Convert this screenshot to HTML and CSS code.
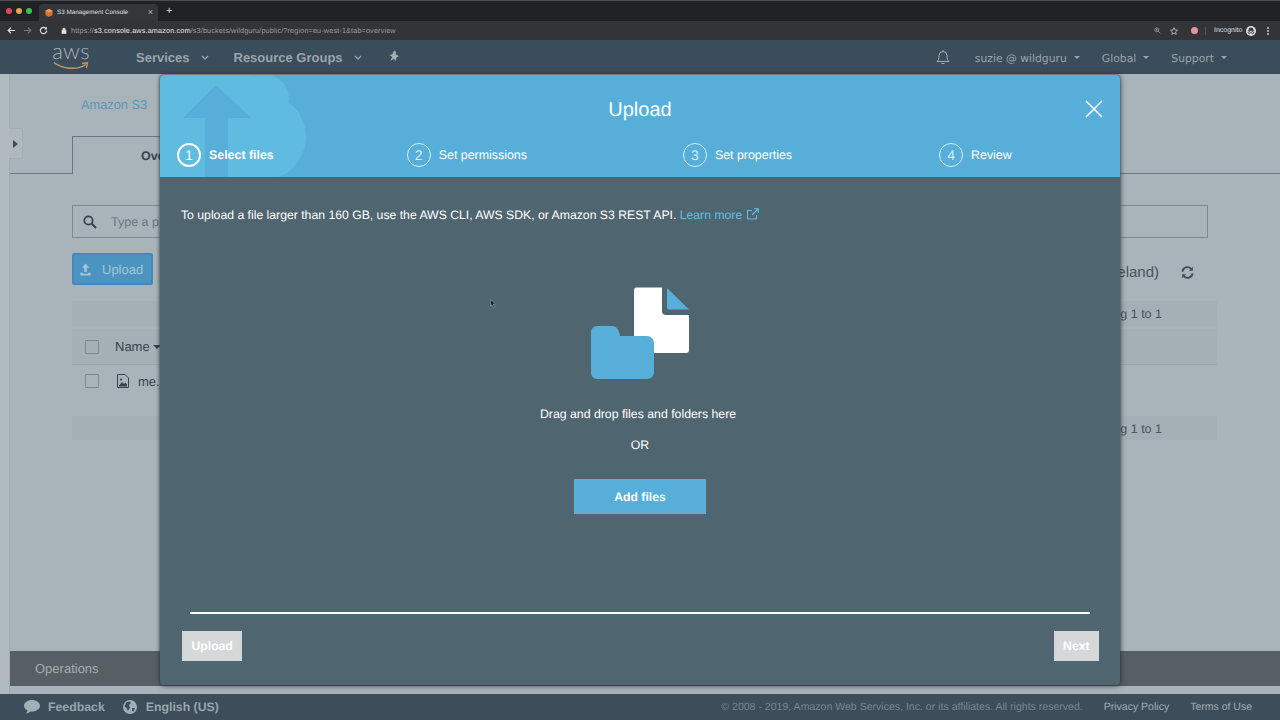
FILE: index.html
```html
<!DOCTYPE html>
<html lang="en">
<head>
<meta charset="utf-8">
<title>S3 Management Console</title>
<link rel="stylesheet" href="styles.css">
</head>
<body>
<div class="page">
  <div class="tabstrip">
    <div class="lights"><i class="light red"></i><i class="light yellow"></i><i class="light green"></i></div>
    <div class="browser-tab">
      <svg class="favicon" viewBox="0 0 10 10"><path d="M5 0 9.500 2.200V7.500L5 10 .5 7.500V2.200Z" fill="#d9722e"/><path d="M5 0 9.500 2.200 5 4.500 .5 2.200Z" fill="#eda05e"/></svg>
      <span class="tab-title">S3 Management Console</span>
      <span class="tab-close">×</span>
    </div>
    <span class="tab-new">+</span>
  </div>
  <div class="addressbar">
    <svg class="nav-ic" viewBox="0 0 10 10"><path d="M9 5H1.500M4.500 1.800 1.300 5l3.200 3.200" fill="none" stroke="#dfe1e4" stroke-width="1.300"/></svg>
    <svg class="nav-ic" viewBox="0 0 10 10"><path d="M1 5h7.500M5.500 1.800 8.700 5 5.500 8.200" fill="none" stroke="#76787b" stroke-width="1.300"/></svg>
    <svg class="nav-ic" viewBox="0 0 10 10"><path d="M8.500 5a3.500 3.500 0 1 1-1-2.500" fill="none" stroke="#dfe1e4" stroke-width="1.300"/><path d="M8.800 .8v3h-3z" fill="#dfe1e4"/></svg>
    <div class="url">
      <svg class="lock" viewBox="0 0 8 10"><path d="M1 4.500h6V9.500H1zM2.300 4.500V3a1.700 1.700 0 0 1 3.400 0v1.500" fill="#dfe1e4" stroke="#dfe1e4" stroke-width=".7" fill-opacity="1"/></svg>
      <span class="url-dim">https://</span><span class="url-host">s3.console.aws.amazon.com</span><span class="url-dim">/s3/buckets/wildguru/public/?region=eu-west-1&amp;tab=overview</span>
      <span class="url-end">
        <svg class="mini" viewBox="0 0 10 10"><circle cx="4" cy="4" r="2.800" fill="none" stroke="#aaadb0"/><path d="M6 6l3 3M2.800 4h2.400M4 2.800v2.400" stroke="#aaadb0"/></svg>
        <svg class="mini star" viewBox="0 0 10 10"><path d="M5 .8 6.300 3.700 9.400 4 7 6.100 7.700 9.200 5 7.600 2.300 9.200 3 6.100 .6 4 3.700 3.700Z" fill="none" stroke="#c4c6c9"/></svg>
      </span>
    </div>
    <div class="chrome-right">
      <i class="ext-dot"></i>
      <i class="chrome-sep"></i>
      <span class="incognito">Incognito</span>
      <svg class="incog-ic" viewBox="0 0 12 12"><circle cx="6" cy="6" r="6" fill="#dfe1e4"/><path d="M2 5.500h8M3.500 5 4.200 2.500h3.600L8.500 5" stroke="#35363a" fill="#35363a"/><circle cx="4" cy="8" r="1.300" fill="none" stroke="#35363a"/><circle cx="8" cy="8" r="1.300" fill="none" stroke="#35363a"/></svg>
      <span class="kebab"><i></i><i></i><i></i></span>
    </div>
  </div>
  <nav class="topnav">
    <div class="logo">
      <span class="logo-text">aws</span>
      <svg class="smile" viewBox="0 0 36 10"><path d="M1 1.500C9 8 24 9.500 33 3.500" fill="none" stroke="#c79a5c" stroke-width="1.500"/><path d="M29 2.500 34.500 1.800 33.500 7" fill="none" stroke="#c79a5c" stroke-width="1.300"/></svg>
    </div>
    <span class="nav-item services">Services</span>
    <svg class="chev" viewBox="0 0 8 5"><path d="M1 1l3 3 3-3" fill="none" stroke="#9aa5ad" stroke-width="1.300"/></svg>
    <span class="nav-item groups">Resource Groups</span>
    <svg class="chev" viewBox="0 0 8 5"><path d="M1 1l3 3 3-3" fill="none" stroke="#9aa5ad" stroke-width="1.300"/></svg>
    <svg class="pin" viewBox="0 0 12 12"><path d="M6 .5 8 1.800 7.600 4 10.800 6.200 8.200 7.800 8 11 5.600 8.700 2.200 11.200 4.200 7 1.500 5 4.500 4.300Z" fill="#a4aeb5"/></svg>
    <div class="nav-right">
      <svg class="bell" viewBox="0 0 14 16"><path d="M1 12.500c1.500-1.500 2-2.500 2-6a4 4 0 0 1 8 0c0 3.500.5 4.500 2 6ZM5.500 14.500h3M7 1v1.200" fill="none" stroke="#a4aeb5" stroke-width="1"/></svg>
      <span class="nav-light user">suzie @ wildguru</span><i class="caret"></i>
      <span class="nav-light global">Global</span><i class="caret"></i>
      <span class="nav-light support">Support</span><i class="caret"></i>
    </div>
  </nav>
  <main class="main">
    <div class="strip"><div class="toggle"><i class="toggle-arrow"></i></div></div>
    <div class="console">
      <div class="content">
        <div class="crumb">Amazon S3</div>
        <div class="tabbar"><div class="tab">Ove</div></div>
        <div class="pad">
          <div class="search">
            <svg class="search-ic" viewBox="0 0 14 14"><circle cx="5.500" cy="5.500" r="4.200" fill="none" stroke="#34434d" stroke-width="1.800"/><path d="M8.800 8.800 13 13" stroke="#34434d" stroke-width="2"/></svg>
            <span class="search-text">Type a p</span>
          </div>
          <div class="toolbar">
            <div class="upload-btn">
              <svg class="upload-ic" viewBox="0 0 14 14"><path d="M7 .5 11 5H8.500V9.500h-3V5H3ZM1.500 10.500h3v1h5v-1h3V13.500h-11Z" fill="#a4c4d8"/></svg>
              Upload
            </div>
            <div class="region">EU (Ireland)</div>
            <svg class="refresh" viewBox="0 0 14 14"><path d="M1.500 6A5.500 5.500 0 0 1 11 3M12.500 8A5.500 5.500 0 0 1 3 11" fill="none" stroke="#3f4f59" stroke-width="2"/><path d="M12.800.8V5.200H8.400ZM1.200 13.200V8.800H5.600Z" fill="#3f4f59"/></svg>
          </div>
          <div class="infobar">Viewing 1 to 1</div>
          <div class="table-head">
            <i class="check"></i>
            <span class="th-name">Name</span><i class="sort"></i>
          </div>
          <div class="table-row">
            <i class="check"></i>
            <svg class="file-ic" viewBox="0 0 12 14"><path d="M.5.5H8L11.500 4V13.500H.5Z" fill="none" stroke="#34434d"/><path d="M2 11.500 5 8l2 2 1.500-1.500L10 10.500v2H2Z" fill="#34434d"/><circle cx="4" cy="5.500" r="1.100" fill="#34434d"/></svg>
            <span class="td-name">me.jpg</span>
          </div>
          <div class="infobar lower">Viewing 1 to 1</div>
        </div>
      </div>
      <div class="operations">Operations</div>
    </div>
  </main>
  <footer class="footer">
    <svg class="foot-ic" viewBox="0 0 16 14"><path d="M8 0C3.600 0 0 2.500 0 5.700c0 2 1.400 3.700 3.500 4.700-.2 1.300-1 2.300-1.800 3 2-.2 3.700-1 4.800-2 .5 0 1 .1 1.500.1 4.400 0 8-2.600 8-5.800S12.400 0 8 0Z" fill="#a4aeb5"/></svg>
    <span class="foot-strong feedback">Feedback</span>
    <svg class="foot-ic globe" viewBox="0 0 14 14"><circle cx="7" cy="7" r="7" fill="#a4aeb5"/><path d="M3 2.500 6.500 1.500 8 3 6 5 7 7.500 5 11 3.500 8 1.500 6.500ZM9 8h3l-1.500 3.500L9 11Z" fill="#3d4d5a"/></svg>
    <span class="foot-strong">English (US)</span>
    <span class="copyright">© 2008 - 2019, Amazon Web Services, Inc. or its affiliates. All rights reserved.</span>
    <span class="foot-link privacy">Privacy Policy</span>
    <span class="foot-link">Terms of Use</span>
  </footer>

  <section class="modal">
    <header class="modal-head">
      <svg class="watermark" viewBox="0 0 150 102"><g fill="#5fbbe0"><path d="M0 6a6 6 0 0 1 6-6H95V102H0Z"/><circle cx="104" cy="24" r="25"/><circle cx="103" cy="62" r="43"/></g><path d="M56 10 91 43H68V102H45V43H23Z" fill="#57afd9"/></svg>
      <h1 class="modal-title">Upload</h1>
      <svg class="modal-close" viewBox="0 0 18 18"><path d="M1 1 17 17M17 1 1 17" stroke="#fff" stroke-width="1.600"/></svg>
      <div class="steps">
        <div class="step active"><span class="num">1</span><span class="lbl">Select files</span></div>
        <div class="step s2"><span class="num">2</span><span class="lbl">Set permissions</span></div>
        <div class="step s3"><span class="num">3</span><span class="lbl">Set properties</span></div>
        <div class="step s4"><span class="num">4</span><span class="lbl">Review</span></div>
      </div>
    </header>
    <div class="modal-body">
      <p class="notice">To upload a file larger than 160 GB, use the AWS CLI, AWS SDK, or Amazon S3 REST API. <span class="learn">Learn more <svg class="ext" viewBox="0 0 12 12"><path d="M9.500 7v4h-9V2.500H5M7 .7h4.300V5M11 1 5 7" fill="none" stroke="#5cc0e8" stroke-width="1.100"/></svg></span></p>
      <svg class="drop-art" viewBox="0 0 100 94"><path d="M44 4a2.500 2.500 0 0 1 2.500-2.500H72V25a4 4 0 0 0 4 4H99V64a3 3 0 0 1-3 3H44Z" fill="#fff"/><path d="M77 2 99 23.500H79a2 2 0 0 1-2-2Z" fill="#57afd9"/><path d="M7 40H22c4 0 7 3 8 10H57a7 7 0 0 1 7 7V86a7 7 0 0 1-7 7H7a6 6 0 0 1-6-6V46a6 6 0 0 1 6-6Z" fill="#57afd9"/></svg>
      <p class="drop-text">Drag and drop files and folders here</p>
      <p class="or">OR</p>
      <div class="add-files">Add files</div>
      <div class="rule"></div>
      <div class="modal-foot">
        <span class="btn-disabled">Upload</span>
        <span class="btn-disabled">Next</span>
      </div>
    </div>
    <svg class="cursor" viewBox="0 0 6 9"><path d="M.5.500 5.500 5 3.200 5.200 4.200 8 3 8.500 2 5.700.5 7Z" fill="#1c2226" stroke="#c4ccd0" stroke-width=".4"/></svg>
  </section>
</div>
</body>
</html>
```
FILE: styles.css
```css
* { box-sizing: border-box; }
html, body { margin: 0; padding: 0; }
body { font-family: "Liberation Sans", Arial, sans-serif; text-rendering: geometricPrecision; }
i { display: block; }
.page { position: relative; width: 1280px; height: 720px; overflow: hidden; display: flex; flex-direction: column; background: #a9b4ba; }

/* browser chrome */
.tabstrip { height: 21px; flex: none; background: #202124; border-top: 1px solid #4b4c4f; display: flex; align-items: flex-end; }
.lights { display: flex; gap: 4px; padding: 0 0 7px 6px; width: 39px; }
.light { width: 6px; height: 6px; border-radius: 50%; }
.red { background: #e0475a; }
.yellow { background: #e0a93a; }
.green { background: #3cc04a; }
.browser-tab { width: 119px; height: 17px; background: #35363a; border-radius: 4px 4px 0 0; display: flex; align-items: center; padding: 0 5px 0 6px; }
.favicon { width: 8px; height: 8px; margin-right: 4px; }
.tab-title { font-size: 6.300px; color: #dfe1e4; flex: 1; white-space: nowrap; }
.tab-close { font-size: 9px; color: #b5b7ba; line-height: 1; }
.tab-new { color: #dfe1e4; font-size: 11px; line-height: 1; margin: 0 0 4px 8px; }
.addressbar { height: 19px; flex: none; background: #333438; display: flex; align-items: center; padding: 0 0 0 7px; }
.nav-ic { width: 9px; height: 9px; margin-right: 7px; flex: none; }
.url { display: flex; align-items: center; width: 1128px; height: 15px; margin-left: 3px; font-size: 7.250px; white-space: nowrap; letter-spacing: .02em; padding-left: 3px; }
.lock { width: 6px; height: 7px; margin-right: 4px; }
.url-dim { color: #9b9da0; }
.url-host { color: #e4e6e8; }
.url-end { margin-left: auto; display: flex; align-items: center; gap: 9px; padding-right: 8px; }
.mini { width: 7px; height: 7px; }
.star { width: 8px; height: 8px; }
.chrome-right { display: flex; align-items: center; flex: 1; }
.ext-dot { width: 7px; height: 7px; border-radius: 50%; background: #e2959f; margin-left: 5px; }
.chrome-sep { width: 1px; height: 8px; background: #55565a; margin-left: 7px; }
.incognito { font-size: 7px; color: #dfe1e4; margin-left: 8px; }
.incog-ic { width: 10px; height: 10px; margin-left: 4px; }
.kebab { display: flex; flex-direction: column; gap: 1px; margin-left: 11px; }
.kebab i { width: 2px; height: 2px; background: #c8cacc; border-radius: 50%; }

/* aws top nav */
.topnav { height: 34px; flex: none; background: #3b4c5a; display: flex; align-items: center; position: relative; }
.logo { width: 36px; margin-left: 53px; height: 34px; display: flex; flex-direction: column; align-items: center; }
.logo-text { font-family: "Lato", "Liberation Sans", sans-serif; font-weight: 300; font-size: 22px; line-height: 20px; color: #aab3ba; letter-spacing: .3px; margin-top: 1px; }
.smile { width: 36px; height: 10px; margin-top: 0; }
.nav-item { font-size: 13px; font-weight: 700; color: #9aa5ad; }
.services { margin-left: 47px; }
.groups { margin-left: 25px; }
.chev { width: 8px; height: 5px; margin-left: 11px; }
.pin { width: 12px; height: 12px; margin-left: 26px; margin-bottom: 2px; }
.nav-right { margin-left: auto; display: flex; align-items: center; padding-right: 53px; }
.bell { width: 14px; height: 16px; margin-right: 25px; }
.nav-light { font-family: "DejaVu Sans", sans-serif; font-size: 10.800px; line-height: 16px; padding-top: 3px; color: #9aa5ad; }
.caret { width: 0; height: 0; border: 3.500px solid transparent; border-top: 3.500px solid #9aa5ad; border-bottom: 0; margin-left: 7px; }
.global { margin-left: 22px; }
.support { margin-left: 22px; }

/* dimmed console */
.main { flex: 1; display: flex; min-height: 0; position: relative; }
.strip { width: 10px; flex: none; background: #b0babf; border-right: 1px solid #a0abb1; position: relative; }
.toggle { position: absolute; left: 9px; top: 54px; width: 14px; height: 31px; background: #aeb8bd; border: 1px solid #a3aeb3; border-left: 0; border-radius: 0 3px 3px 0; display: flex; align-items: center; justify-content: center; }
.toggle-arrow { width: 0; height: 0; border: 4px solid transparent; border-left: 5px solid #404d56; border-right: 0; }
.console { flex: 1; display: flex; flex-direction: column; min-width: 0; padding-bottom: 8px; }
.content { flex: 1; }
.crumb { font-size: 12.800px; color: #5b95b5; height: 62px; padding: 22px 0 0 71px; line-height: 17px; }
.tabbar { height: 38px; border-bottom: 1px solid #687782; padding-left: 62px; }
.tab { width: 170px; height: 38px; border: 1px solid #687782; border-bottom: 0; background: #a9b4ba; font-size: 12.500px; font-weight: 700; color: #35434d; padding: 12px 0 0 68px; }
.pad { padding: 31px 63px 0 62px; }
.search { height: 33px; margin-right: 9px; border: 1px solid #7c8990; display: flex; align-items: center; padding-left: 10px; }
.search-ic { width: 14px; height: 14px; flex: none; }
.search-text { font-size: 12.500px; color: #6a7780; margin-left: 14px; }
.toolbar { margin-top: 15px; height: 32px; display: flex; align-items: center; }
.upload-btn { width: 81px; height: 32px; background: #4b94bf; border: 2px solid #4488bf; border-radius: 2px; display: flex; align-items: center; padding-left: 5px; color: #a4c4d8; font-size: 13px; }
.upload-ic { width: 13px; height: 13px; margin-right: 10px; }
.region { margin-left: auto; font-size: 15px; color: #47545d; margin-top: 6px; }
.refresh { width: 13px; height: 13px; margin: 6px 23px 0 22px; }
.infobar { height: 25px; margin-top: 16px; background: #a5b0b6; text-align: right; padding-right: 55px; font-size: 12.500px; line-height: 26px; color: #47545d; }
.table-head { height: 36px; margin-top: 3px; background: #a5b0b6; border-bottom: 1px solid #9aa6ac; display: flex; align-items: center; padding-left: 13px; }
.check { width: 14px; height: 14px; border: 1px solid #7c8990; border-radius: 1px; flex: none; }
.th-name { font-size: 13px; color: #35434d; margin-left: 16px; }
.sort { width: 0; height: 0; border: 4px solid transparent; border-top: 4px solid #35434d; border-bottom: 0; margin-left: 3px; }
.table-row { height: 32px; display: flex; align-items: center; padding-left: 13px; }
.file-ic { width: 12px; height: 14px; margin-left: 18px; }
.td-name { font-size: 13px; color: #35434d; margin-left: 9px; }
.infobar.lower { margin-top: 19px; height: 24px; }
.operations { height: 35px; flex: none; background: #565f63; color: #a4aeb3; font-size: 13px; line-height: 35px; padding-left: 25px; }

/* footer */
.footer { height: 26px; flex: none; background: #3d4d5a; display: flex; align-items: center; padding: 0 28px 0 24px; color: #9aa5ad; }
.foot-ic { width: 16px; height: 14px; margin-right: 8px; flex: none; }
.globe { width: 14px; margin-right: 9px; }
.foot-strong { font-size: 12.300px; font-weight: 700; }
.feedback { margin-right: 18px; }
.copyright { margin-left: auto; font-size: 10.550px; color: #7a8791; }
.foot-link { font-size: 10.500px; color: #a4aeb5; margin-left: 21px; }

/* modal */
.modal { position: absolute; left: 160px; top: 75px; width: 960px; height: 610px; background: #4f6570; border-radius: 4px; box-shadow: 0 0 3px 1px rgba(30, 40, 46, .55), 1px 2px 6px rgba(30, 40, 46, .3); display: flex; flex-direction: column; overflow: hidden; }
.modal-head { height: 102px; flex: none; background: #57afd9; position: relative; overflow: hidden; }
.watermark { position: absolute; left: 0; top: 0; width: 150px; height: 102px; }
.modal-title { position: relative; margin: 0; text-align: center; color: #fff; font-size: 20px; font-weight: 400; line-height: 24px; padding-top: 23px; }
.modal-close { position: absolute; right: 17px; top: 25px; width: 18px; height: 18px; }
.steps { position: absolute; left: 17px; top: 68px; display: flex; }
.step { display: flex; align-items: center; color: #fff; font-size: 12.400px; white-space: nowrap; }
.step.s2 { margin-left: 133px; }
.step.s3 { margin-left: 156px; }
.step.s4 { margin-left: 147px; }
.num { width: 24px; height: 24px; border: 1px solid #d5edf8; border-radius: 50%; display: flex; align-items: center; justify-content: center; font-size: 14px; color: #d5edf8; margin-right: 8px; }
.active .num { border: 2px solid #fff; color: #fff; }
.active .lbl { font-weight: 700; }
.modal-body { flex: 1; display: flex; flex-direction: column; align-items: center; min-height: 0; }
.notice { align-self: flex-start; margin: 30px 0 0 21px; font-size: 12.230px; line-height: 16px; color: #fff; white-space: nowrap; }
.learn { color: #5cc0e8; }
.ext { width: 12px; height: 12px; vertical-align: -1px; margin-left: 1px; }
.drop-art { width: 100px; height: 94px; margin: 63px 0 0 0; flex: none; }
.drop-text { margin: 26px 0 0 -4px; font-size: 12.300px; line-height: 17px; color: #fff; }
.or { margin: 14px 0 0; font-size: 12.300px; line-height: 17px; color: #fff; }
.add-files { width: 132px; height: 35px; margin-top: 25px; background: #57afd9; color: #fff; font-size: 12.200px; font-weight: 700; display: flex; align-items: center; justify-content: center; }
.rule { width: 900px; height: 2px; background: #fff; margin-top: 98px; flex: none; }
.modal-foot { align-self: stretch; display: flex; justify-content: space-between; padding: 17px 21px 0 22px; }
.btn-disabled { height: 30px; padding: 0 9.500px; background: #d5d8d8; color: #fff; font-size: 12.200px; font-weight: 700; line-height: 30px; }
.cursor { position: absolute; left: 330px; top: 224px; width: 6px; height: 9px; }
```
